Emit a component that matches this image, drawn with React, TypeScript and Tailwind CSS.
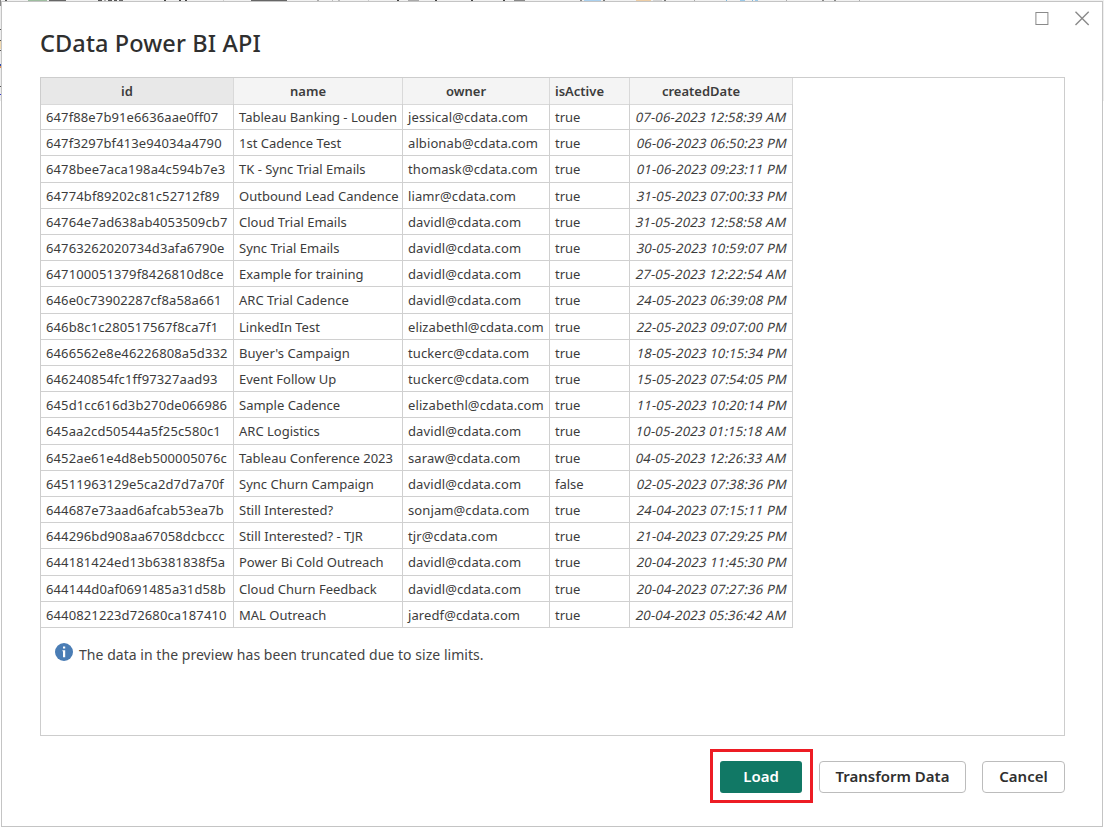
type Row = [id: string, name: string, owner: string, active: string, created: string];

const rows: Row[] = [
  ['647f88e7b91e6636aae0ff07', 'Tableau Banking - Louden', 'jessical@cdata.com', 'true', '07-06-2023 12:58:39 AM'],
  ['647f3297bf413e94034a4790', '1st Cadence Test', 'albionab@cdata.com', 'true', '06-06-2023 06:50:23 PM'],
  ['6478bee7aca198a4c594b7e3', 'TK - Sync Trial Emails', 'thomask@cdata.com', 'true', '01-06-2023 09:23:11 PM'],
  ['64774bf89202c81c52712f89', 'Outbound Lead Candence', 'liamr@cdata.com', 'true', '31-05-2023 07:00:33 PM'],
  ['64764e7ad638ab4053509cb7', 'Cloud Trial Emails', 'davidl@cdata.com', 'true', '31-05-2023 12:58:58 AM'],
  ['64763262020734d3afa6790e', 'Sync Trial Emails', 'davidl@cdata.com', 'true', '30-05-2023 10:59:07 PM'],
  ['647100051379f8426810d8ce', 'Example for training', 'davidl@cdata.com', 'true', '27-05-2023 12:22:54 AM'],
  ['646e0c73902287cf8a58a661', 'ARC Trial Cadence', 'davidl@cdata.com', 'true', '24-05-2023 06:39:08 PM'],
  ['646b8c1c280517567f8ca7f1', 'LinkedIn Test', 'elizabethl@cdata.com', 'true', '22-05-2023 09:07:00 PM'],
  ['6466562e8e46226808a5d332', "Buyer's Campaign", 'tuckerc@cdata.com', 'true', '18-05-2023 10:15:34 PM'],
  ['646240854fc1ff97327aad93', 'Event Follow Up', 'tuckerc@cdata.com', 'true', '15-05-2023 07:54:05 PM'],
  ['645d1cc616d3b270de066986', 'Sample Cadence', 'elizabethl@cdata.com', 'true', '11-05-2023 10:20:14 PM'],
  ['645aa2cd50544a5f25c580c1', 'ARC Logistics', 'davidl@cdata.com', 'true', '10-05-2023 01:15:18 AM'],
  ['6452ae61e4d8eb500005076c', 'Tableau Conference 2023', 'saraw@cdata.com', 'true', '04-05-2023 12:26:33 AM'],
  ['64511963129e5ca2d7d7a70f', 'Sync Churn Campaign', 'davidl@cdata.com', 'false', '02-05-2023 07:38:36 PM'],
  ['644687e73aad6afcab53ea7b', 'Still Interested?', 'sonjam@cdata.com', 'true', '24-04-2023 07:15:11 PM'],
  ['644296bd908aa67058dcbccc', 'Still Interested? - TJR', 'tjr@cdata.com', 'true', '21-04-2023 07:29:25 PM'],
  ['644181424ed13b6381838f5a', 'Power Bi Cold Outreach', 'davidl@cdata.com', 'true', '20-04-2023 11:45:30 PM'],
  ['644144d0af0691485a31d58b', 'Cloud Churn Feedback', 'davidl@cdata.com', 'true', '20-04-2023 07:27:36 PM'],
  ['6440821223d72680ca187410', 'MAL Outreach', 'jaredf@cdata.com', 'true', '20-04-2023 05:36:42 AM'],
];

const columns = 'grid grid-cols-[193px_169px_147px_80px_163px]';
const cell = 'border-r border-b border-[#d0d0d0] pl-[5px] whitespace-nowrap overflow-hidden';

const strip: [left: string, look: string][] = [
  ['left-[5px]', 'w-[2px] bg-[#555]'],
  ['left-[28px]', 'w-[19px] bg-[#9dbd9f]'],
  ['left-[49px]', 'w-[17px] bg-[#666]'],
  ['left-[98px]', 'w-[4px] bg-[#555]'],
  ['left-[104px]', 'w-[2px] bg-[#aaa]'],
  ['left-[108px]', 'w-[4px] bg-[#555]'],
  ['left-[114px]', 'w-[3px] bg-[#555]'],
  ['left-[119px]', 'w-[4px] bg-[#666]'],
  ['left-[164px]', 'w-[2px] bg-[#444]'],
  ['left-[179px]', 'w-[2px] bg-[#444]'],
  ['left-[185px]', 'w-[2px] bg-[#444]'],
  ['left-[223px]', 'w-[1px] bg-[#ccc]'],
  ['left-[251px]', 'w-[36px] bg-[#666]'],
  ['left-[317px]', 'w-[2px] bg-[#aaa]'],
  ['left-[332px]', 'w-[1px] bg-[#bbb]'],
  ['left-[338px]', 'w-[2px] bg-[#bbb]'],
  ['left-[368px]', 'w-[1px] bg-[#ccc]'],
  ['left-[397px]', 'w-[2px] bg-[#444]'],
  ['left-[408px]', 'w-[11px] bg-[#aaa]'],
  ['left-[435px]', 'w-[2px] bg-[#444]'],
  ['left-[471px]', 'w-[2px] bg-[#444]'],
  ['left-[503px]', 'w-[2px] bg-[#444]'],
  ['left-[514px]', 'w-[11px] bg-[#888]'],
  ['left-[580px]', 'w-[2px] bg-[#888]'],
  ['left-[584px]', 'w-[17px] bg-[#aad0ee]'],
  ['left-[603px]', 'w-[2px] bg-[#777]'],
  ['left-[636px]', 'w-[15px] bg-[#edcda5]'],
  ['left-[653px]', 'w-[9px] bg-[#d5d5d5]'],
  ['left-[664px]', 'w-[2px] bg-[#777]'],
  ['left-[694px]', 'w-[1px] bg-[#aaa]'],
  ['left-[726px]', 'w-[1px] bg-[#7ab8e0]'],
  ['left-[740px]', 'w-[5px] bg-[#9ac8e8]'],
  ['left-[752px]', 'w-[1px] bg-[#7ab8e0]'],
  ['left-[755px]', 'w-[3px] bg-[#9ac8e8]'],
  ['left-[786px]', 'w-[1px] bg-[#aaa]'],
  ['left-[822px]', 'w-[2px] bg-[#888]'],
  ['left-[834px]', 'w-[2px] bg-[#888]'],
  ['left-[859px]', 'w-[1px] bg-[#aaa]'],
];

function BackgroundWindow() {
  return (
    <>
      <div className="absolute inset-x-0 top-0 h-px bg-[#f1f1f1]">
        {strip.map(([left, look]) => (
          <span key={left} className={`absolute top-0 h-px ${left} ${look}`} />
        ))}
      </div>
      <div className="absolute left-0 top-0 h-[101px] w-px bg-[#ececec]">
        <span className="absolute left-0 top-0 h-[6px] w-px bg-[#888]" />
        <span className="absolute left-0 top-[29px] h-px w-px bg-[#555]" />
        <span className="absolute left-0 top-[40px] h-px w-px bg-[#555]" />
        <span className="absolute left-0 top-[41px] h-[8px] w-px bg-[#f0d9b0]" />
        <span className="absolute left-0 top-[50px] h-px w-px bg-[#555]" />
        <span className="absolute left-0 top-[64px] h-[2px] w-px bg-[#2c4db5]" />
        <span className="absolute left-0 top-[66px] h-[2px] w-px bg-[#e58f4d]" />
        <span className="absolute left-0 top-[86px] h-px w-px bg-[#555]" />
        <span className="absolute left-0 top-[94px] h-px w-px bg-[#3a3acc]" />
      </div>
      <div className="absolute right-0 top-0 h-[101px] w-px bg-[#efefef]" />
    </>
  );
}

function WindowControls() {
  return (
    <div className="absolute right-[12px] top-[9px] flex gap-[24px]">
      <svg width="16" height="16" viewBox="0 0 16 16" fill="none" stroke="#8a8a8a">
        <rect x="1.9" y="1.5" width="12" height="12" />
      </svg>
      <svg width="16" height="16" viewBox="0 0 16 16" fill="none" stroke="#8a8a8a" strokeWidth="1.4">
        <path d="M1.5 .8l13.2 13.2M14.7 .8L1.5 14" />
      </svg>
    </div>
  );
}

function PreviewTable() {
  return (
    <div className="w-[752px] text-[13px] text-[#3c3c3c]">
      <div className={`${columns} h-[26px] text-center font-semibold leading-[26px]`}>
        {['id', 'name', 'owner', 'isActive', 'createdDate'].map((title) => (
          <div
            key={title}
            className={`border-r border-b border-[#d9d9d9] pr-5 ${title === 'id' ? 'bg-[#e8e8e8]' : 'bg-[#f4f4f4]'}`}
          >
            <span className="whitespace-nowrap">{title}</span>
          </div>
        ))}
      </div>
      <div className="grid h-[524px] grid-rows-20">
        {rows.map(([id, name, owner, active, created]) => (
          <div key={id} className={`${columns} leading-[26px]`}>
            <div className={`${cell} tracking-[0.12px]`}>{id}</div>
            <div className={cell}>{name}</div>
            <div className={`${cell} tracking-[0.1px]`}>{owner}</div>
            <div className={cell}>{active}</div>
            <div className={`${cell} pr-[5px] text-right tracking-[0.2px]`}>
              <span className="inline-block -skew-x-12">{created}</span>
            </div>
          </div>
        ))}
      </div>
    </div>
  );
}

export default function App() {
  return (
    <div className="relative h-[829px] w-[1104px] overflow-hidden bg-white pl-px pt-px font-['Noto_Sans','Open_Sans',sans-serif]">
      <BackgroundWindow />
      <main className="relative flex h-[826px] w-[1102px] flex-col border border-[#c4c4c4] bg-white pl-[38px] pr-[37px]">
        <WindowControls />
        <h1 className="mt-[24px] h-[51px] text-[23.5px] font-medium leading-[34px] tracking-[0.12px] text-[#2f2f2f]">
          CData Power BI API
        </h1>
        <section className="h-[659px] w-[1025px] shrink-0 border border-[#cdcdcd]">
          <PreviewTable />
          <div className="flex items-start pl-[14px] pt-[15px]">
            <svg width="18" height="18" viewBox="0 0 18 18">
              <circle cx="9" cy="9" r="9" fill="#4a7db5" />
              <path d="M8 3.5h2.2v2H8zM7.4 7.2h2.8v7H8v-6h-.6z" fill="#fff" />
            </svg>
            <p className="ml-[6px] text-[14px] leading-[24px] tracking-[0.04px] text-[#444]">
              The data in the preview has been truncated due to size limits.
            </p>
          </div>
        </section>
        <footer className="mt-[13px] flex items-center justify-end text-[15px] font-semibold text-[#2f2f2f]">
          <div className="mr-[6px] h-[54px] w-[103px] border-3 border-[#ed1c24] px-[7px] py-[9px]">
            <button className="block h-[32px] w-[82px] rounded-[3px] bg-[#117865] pb-[2px] leading-[30px] text-white">
              Load
            </button>
          </div>
          <button className="mr-[16px] mt-[2px] h-[32px] w-[147px] rounded-[4px] border border-[#bcbcbc] pb-[2px] leading-[28px]">
            Transform Data
          </button>
          <button className="mt-[2px] h-[32px] w-[83px] rounded-[4px] border border-[#bcbcbc] pb-[2px] leading-[28px]">
            Cancel
          </button>
        </footer>
      </main>
    </div>
  );
}
